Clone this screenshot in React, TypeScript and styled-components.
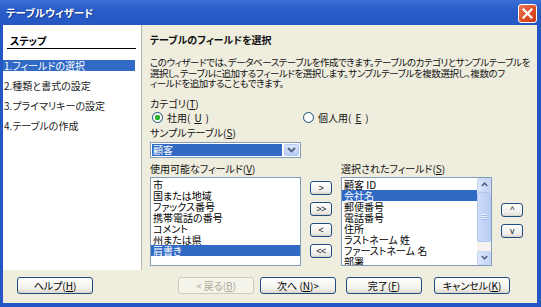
import React from "react";
import styled, {createGlobalStyle} from "styled-components";

const GlobalStyle = createGlobalStyle`
  html, body {
    margin: 0;
    padding: 0;
    background: #ffffff;
  }
  body {
    font-family: "Noto Sans CJK JP", "Liberation Sans", sans-serif;
    font-size: 10px;
    font-feature-settings: "palt" 1;
  }
`

const steps = ["1.フィールドの選択", "2.種類と書式の設定", "3.プライマリキーの設定", "4.テーブルの作成"]
const available = ["市", "国または地域", "ファックス番号", "携帯電話の番号", "コメント", "州または県", "肩書き"]
const selected = ["顧客 ID", "会社名", "郵便番号", "電話番号", "住所", "ラストネーム 姓", "ファーストネーム 名", "部署"]

const App = () => {
    return (
        <>
            <GlobalStyle/>
            <Window>
                <TitleBar>
                    <Title>テーブルウィザード</Title>
                    <CloseButton>
                        <svg width="11" height="11" viewBox="0 0 11 11">
                            <path d="M1.5 1.5 L9.5 9.5 M9.5 1.5 L1.5 9.5" stroke="#fff" strokeWidth="2.2"
                                  strokeLinecap="square"/>
                        </svg>
                    </CloseButton>
                </TitleBar>
                <Frame>
                    <Body>
                        <StepPanel>
                            <StepHeader>ステップ</StepHeader>
                            {steps.map((s, i) => <StepItem key={s} active={i === 0}>{s}</StepItem>)}
                        </StepPanel>
                        <Content>
                            <Heading>テーブルのフィールドを選択</Heading>
                            <Intro>
                                <div>このウィザードでは、データベーステーブルを作成できます。テーブルのカテゴリとサンプルテーブルを</div>
                                <div>選択し、テーブルに追加するフィールドを選択します。サンプルテーブルを複数選択し、複数のフ</div>
                                <div>ィールドを追加することもできます。</div>
                            </Intro>
                            <Label>カテゴリ(<u>T</u>)</Label>
                            <RadioRow>
                                <RadioOption><Radio checked/>社用(<u>U</u>)</RadioOption>
                                <RadioOption><Radio/>個人用(<u>E</u>)</RadioOption>
                            </RadioRow>
                            <Label>サンプルテーブル(<u>S</u>)</Label>
                            <Combo>
                                <ComboValue><span>顧客</span></ComboValue>
                                <ComboArrow>
                                    <svg width="9" height="6" viewBox="0 0 9 6">
                                        <path d="M1 1 L4.5 4.5 L8 1" stroke="#4d6185" strokeWidth="1.8" fill="none"/>
                                    </svg>
                                </ComboArrow>
                            </Combo>
                            <FieldsGrid>
                                <Label>使用可能なフィールド(<u>V</u>)</Label>
                                <span/>
                                <Label>選択されたフィールド(<u>S</u>)</Label>
                                <span/>
                                <ListBox>
                                    <ListItems>
                                        {available.map((f, i) => <ListItem key={f} active={i === 6}>{f}</ListItem>)}
                                    </ListItems>
                                </ListBox>
                                <MoveColumn>
                                    <SmallButton>&gt;</SmallButton>
                                    <SmallButton>&gt;&gt;</SmallButton>
                                    <SmallButton>&lt;</SmallButton>
                                    <SmallButton>&lt;&lt;</SmallButton>
                                </MoveColumn>
                                <ListBox>
                                    <ListItems>
                                        {selected.map((f, i) => <ListItem key={f} active={i === 1}>{f}</ListItem>)}
                                    </ListItems>
                                    <ScrollBar>
                                        <ScrollArrow>
                                            <svg width="7" height="5" viewBox="0 0 7 5">
                                                <path d="M0.8 4 L3.5 1.2 L6.2 4" stroke="#4d6185" strokeWidth="1.6"
                                                      fill="none"/>
                                            </svg>
                                        </ScrollArrow>
                                        <Thumb>
                                            <Grip/>
                                        </Thumb>
                                        <Track/>
                                        <ScrollArrow>
                                            <svg width="7" height="5" viewBox="0 0 7 5">
                                                <path d="M0.8 1 L3.5 3.8 L6.2 1" stroke="#4d6185" strokeWidth="1.6"
                                                      fill="none"/>
                                            </svg>
                                        </ScrollArrow>
                                    </ScrollBar>
                                </ListBox>
                                <OrderColumn>
                                    <SmallButton>^</SmallButton>
                                    <SmallButton>v</SmallButton>
                                </OrderColumn>
                            </FieldsGrid>
                        </Content>
                    </Body>
                    <Footer>
                        <Button space={0}>ヘルプ(<u>H</u>)</Button>
                        <Spacer/>
                        <Button space={0} disabled>&lt; 戻る(<u>B</u>)</Button>
                        <Button space={6}>次へ (<u>N</u>)&gt;</Button>
                        <Button space={10}>完了(<u>F</u>)</Button>
                        <Button space={12}>キャンセル(<u>K</u>)</Button>
                    </Footer>
                </Frame>
            </Window>
        </>
    )
}

export default App

//styled-components
const Window = styled.div`
  width: 541px;
  height: 307px;
  display: flex;
  flex-direction: column;
  background: #2456c6;
  overflow: hidden;
`
const TitleBar = styled.div`
  height: 25px;
  flex-shrink: 0;
  display: flex;
  align-items: center;
  justify-content: space-between;
  padding: 0 4px 0 6px;
  background: linear-gradient(#3a6fd6 0%, #2a5dc8 40%, #2556c2 100%);
`
const Title = styled.div`
  color: #ffffff;
  font-size: 10.5px;
  font-weight: 700;
  text-shadow: 1px 1px 0 #1a3c8c;
`
const CloseButton = styled.div`
  width: 19px;
  height: 19px;
  margin-top: 2px;
  display: flex;
  align-items: center;
  justify-content: center;
  border: 1px solid #ffffff;
  border-radius: 3px;
  background: linear-gradient(135deg, #ec7b5a 0%, #dc4a24 60%, #c93a15 100%);
  box-sizing: border-box;
`
const Frame = styled.div`
  flex: 1;
  display: flex;
  flex-direction: column;
  margin: 0 4px 4px 3px;
  background: #efedde;
`
const Body = styled.div`
  height: 245px;
  display: flex;
`
const StepPanel = styled.div`
  width: 139px;
  flex-shrink: 0;
  background: #ffffff;
  border-right: 1px solid #b8b5a5;
  padding-top: 9px;
  box-sizing: border-box;
`
const StepHeader = styled.div`
  margin: 0 5px 11px 4px;
  padding-left: 3px;
  font-weight: 700;
  font-size: 10px;
  line-height: 14px;
  border-bottom: 1px solid #000000;
  color: #000;
`
type ActiveProps = { active?: boolean }
const StepItem = styled.div<ActiveProps>`
  margin: 0 6px 9px 0;
  padding-left: 1px;
  height: 11px;
  line-height: 11px;
  font-size: 10px;
  color: ${props => props.active ? "#ffffff" : "#222222"};
  background: ${props => props.active ? "#316ac5" : "transparent"};
  white-space: nowrap;
`
const Content = styled.div`
  flex: 1;
  padding: 8px 0 0 8px;
  color: #111;
`
const Heading = styled.div`
  font-weight: 700;
  font-size: 10px;
  line-height: 14px;
  margin-bottom: 10px;
`
const Intro = styled.div`
  font-size: 9.5px;
  letter-spacing: -0.45px;
  line-height: 10.5px;
  white-space: nowrap;
  margin-bottom: 8px;
`
const Label = styled.div`
  font-size: 10px;
  line-height: 13px;
  white-space: nowrap;
  u { text-decoration: underline; }
`
const RadioRow = styled.div`
  display: flex;
  height: 14px;
  align-items: center;
  padding-left: 2px;
  margin: 1px 0 1px;
`
const RadioOption = styled.div`
  display: flex;
  align-items: center;
  gap: 4px;
  width: 151px;
  font-size: 10px;
`
type RadioProps = { checked?: boolean }
const Radio = styled.span<RadioProps>`
  width: 11px;
  height: 11px;
  border-radius: 50%;
  border: 1px solid #1c5180;
  background: radial-gradient(circle, ${props => props.checked ? "#2fb22f 0, #2fb22f 2.5px," : ""} #ffffff 3px, #e3e2d8 100%);
  box-sizing: border-box;
`
const Combo = styled.div`
  width: 151px;
  height: 16px;
  margin: 3px 0 4px;
  display: flex;
  border: 1px solid #7f9db9;
  background: #ffffff;
  box-sizing: border-box;
`
const ComboValue = styled.div`
  flex: 1;
  padding: 1px;
  span {
    display: block;
    height: 100%;
    background: #316ac5;
    color: #ffffff;
    font-size: 10px;
    line-height: 12px;
    padding-left: 1px;
  }
`
const ComboArrow = styled.div`
  width: 15px;
  margin: 1px;
  display: flex;
  align-items: center;
  justify-content: center;
  border-radius: 2px;
  background: linear-gradient(#d9e5fb, #b7cbf4);
  border: 1px solid #b4c8f6;
  box-sizing: border-box;
`
const FieldsGrid = styled.div`
  display: grid;
  grid-template-columns: 151px 22px 151px 22px;
  grid-template-rows: 14px 89px;
  column-gap: 9px;
  row-gap: 1px;
`
const ListBox = styled.div`
  display: flex;
  border: 1px solid #7f9db9;
  background: #ffffff;
  overflow: hidden;
`
const ListItems = styled.div`
  flex: 1;
  min-width: 0;
  padding-top: 1px;
`
const ListItem = styled.div<ActiveProps>`
  height: 11px;
  line-height: 11px;
  padding-left: 2px;
  font-size: 10px;
  white-space: nowrap;
  color: ${props => props.active ? "#ffffff" : "#000000"};
  background: ${props => props.active ? "#316ac5" : "transparent"};
`
const ScrollBar = styled.div`
  width: 14px;
  flex-shrink: 0;
  display: flex;
  flex-direction: column;
  background: #f4f3ee;
`
const ScrollArrow = styled.div`
  height: 14px;
  display: flex;
  align-items: center;
  justify-content: center;
  background: linear-gradient(90deg, #dce7fc, #c3d4f7);
  border: 1px solid #c6d4f5;
  border-radius: 2px;
  box-sizing: border-box;
`
const Thumb = styled.div`
  height: 50px;
  display: flex;
  align-items: center;
  justify-content: center;
  background: linear-gradient(90deg, #cfdcfb, #b8ccf5);
  border: 1px solid #b4c6ef;
  border-radius: 2px;
  box-sizing: border-box;
`
const Grip = styled.div`
  width: 6px;
  height: 6px;
  background: repeating-linear-gradient(#eef3fd 0, #eef3fd 1px, #9fb5e5 1px, #9fb5e5 2px);
`
const Track = styled.div`
  flex: 1;
`
const MoveColumn = styled.div`
  display: flex;
  flex-direction: column;
  gap: 7px;
  padding-top: 4px;
`
const OrderColumn = styled.div`
  display: flex;
  flex-direction: column;
  gap: 7px;
  padding-top: 26px;
`
const SmallButton = styled.div`
  height: 14px;
  display: flex;
  align-items: center;
  justify-content: center;
  font-family: "Liberation Sans", sans-serif;
  font-size: 9px;
  color: #222;
  letter-spacing: -0.5px;
  border: 1px solid #1f4d82;
  border-radius: 3px;
  background: linear-gradient(#ffffff, #ecebe6 80%, #d6d0c5);
  box-sizing: border-box;
`
const Footer = styled.div`
  flex: 1;
  display: flex;
  align-items: center;
  padding: 0 27px 2px 14px;
`
const Spacer = styled.div`
  flex: 1;
`
type ButtonProps = { disabled?: boolean, space: number }
const Button = styled.div<ButtonProps>`
  width: 76px;
  height: 17px;
  margin-left: ${props => props.space}px;
  display: flex;
  align-items: center;
  justify-content: center;
  font-size: 10px;
  color: ${props => props.disabled ? "#aca899" : "#000000"};
  border: 1px solid ${props => props.disabled ? "#cdcac0" : "#1f4d82"};
  border-radius: 3px;
  background: ${props => props.disabled
    ? "#f5f4ea"
    : "linear-gradient(#ffffff, #f1f0ea 70%, #dcd7cb)"};
  box-sizing: border-box;
  white-space: nowrap;
  u { text-decoration: underline; }
`
